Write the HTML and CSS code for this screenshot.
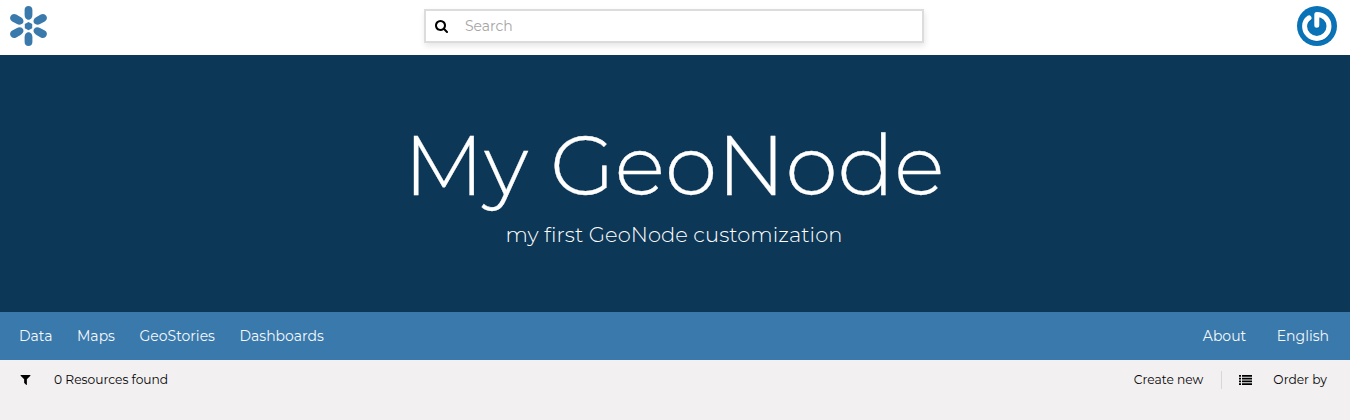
FILE: index.html
```html
<!DOCTYPE html>
<html lang="en">
<head>
<meta charset="utf-8">
<title>My GeoNode</title>
<link rel="stylesheet" href="styles.css">
</head>
<body>
<header class="topbar">
  <svg class="logo" viewBox="0 0 39 40" fill="#3a79ab">
    <path d="M19.500 15.900l3.700 2.100v4.200l-3.700 2.100-3.700-2.100V18z"/>
    <path id="petal" d="M19.500 0c2.300 0 3.900 1.600 3.900 4v4.800c0 2.600-1.100 4.400-3.100 5h-1.600c-2-.6-3.100-2.400-3.100-5V4c0-2.400 1.600-4 3.900-4z"/>
    <g transform="translate(19.500 20) scale(1.030 1) translate(-19.500 -20)">
      <use href="#petal" transform="rotate(60 19.500 20)"/>
      <use href="#petal" transform="rotate(120 19.500 20)"/>
      <use href="#petal" transform="rotate(240 19.500 20)"/>
      <use href="#petal" transform="rotate(300 19.500 20)"/>
    </g>
    <use href="#petal" transform="rotate(180 19.500 20)"/>
  </svg>
  <label class="search">
    <svg class="search-icon" viewBox="0 0 1664 1664"><path d="M1152 704q0-185-131.500-316.500T704 256 387.500 387.500 256 704t131.500 316.500T704 1152t316.500-131.500T1152 704zm512 832q0 52-38 90t-90 38q-54 0-90-38l-343-342q-179 124-399 124-143 0-273.500-55.500t-225-150-150-225T0 704t55.500-273.500 150-225 225-150T704 0t273.500 55.500 225 150 150 225T1408 704q0 220-124 399l343 343q37 37 37 90z"/></svg>
    <span class="placeholder">Search</span>
  </label>
  <svg class="avatar" viewBox="0 0 40 40">
    <circle cx="20" cy="20" r="20" fill="#0a72b7"/>
    <g fill="none" stroke-linecap="round" stroke-linejoin="round">
      <path d="M19.800 19.300V8.500c7 0 12.200 5 12.200 11.700a12.200 12.200 0 0 1-24.400 0c0-3.200 1.600-6.300 4.400-8.300" stroke="#075a96" stroke-width="5" opacity=".5" transform="translate(.6 1)"/>
      <path d="M19.800 19.300V8.500c7 0 12.200 5 12.200 11.700a12.200 12.200 0 0 1-24.400 0c0-3.200 1.600-6.300 4.400-8.300" stroke="#fff" stroke-width="5"/>
    </g>
  </svg>
</header>
<section class="hero">
  <h1 class="title">My GeoNode</h1>
  <p class="tagline">my first GeoNode customization</p>
</section>
<nav class="menu">
  <a class="data">Data</a><a class="maps">Maps</a><a class="stories">GeoStories</a><a class="boards">Dashboards</a>
  <a class="about">About</a><a class="lang">English</a>
</nav>
<div class="toolbar">
  <svg class="filter" viewBox="0 0 1410 1410"><path d="M1405 39q17 41-14 70L898 602v742q0 42-39 59-13 5-25 5-27 0-45-19l-256-256q-19-19-19-45V602L21 109Q-10 78 7 39 24 0 66 0h1280q42 0 59 39z"/></svg>
  <span class="count">0 Resources found</span>
  <span class="create">Create new</span>
  <i class="divider"></i>
  <svg class="list" viewBox="0 0 13 10"><path d="M0 0h2v1.700H0zM3 0h10v1.700H3zM0 2.800h2v1.700H0zM3 2.800h10v1.700H3zM0 5.500h2v1.700H0zM3 5.500h10v1.700H3zM0 8.300h2V10H0zM3 8.300h10V10H3z"/></svg>
  <span class="order">Order by</span>
</div>
</body>
</html>
```
FILE: styles.css
```css
* { box-sizing: border-box; }
body {
  margin: 0;
  height: 420px;
  overflow: hidden;
  background: #f2f0f1;
  color: #050505;
  font-family: Montserrat, Inter, "Open Sans", sans-serif;
}
.topbar {
  display: flex;
  align-items: flex-start;
  justify-content: space-between;
  height: 55px;
  padding: 6px 13px 0 9px;
  background: #fff;
}
.logo { width: 39px; height: 40px; }
.search {
  display: flex;
  align-items: center;
  width: 500px;
  height: 34px;
  margin: 3px 0 0 2px;
  padding-left: 9px;
  border: 2px solid #dcdcdc;
  background: #fff;
  box-shadow: 1px 3px 6px rgba(0, 0, 0, .1);
}
.search-icon { width: 13px; height: 13px; }
.placeholder {
  margin-left: 17.500px;
  color: #a5a5a5;
  font-size: 14px;
  line-height: 18px;
  padding-bottom: 1px;
}
.avatar { width: 40px; height: 40px; }
.hero {
  height: 257px;
  padding-top: 59px;
  background: #0d3757;
  color: #fff;
  text-align: center;
}
.title {
  margin: 0 2px 0 0;
  font-size: 84px;
  font-weight: 300;
  line-height: 102px;
  -webkit-text-stroke: .3px #fff;
}
.tagline {
  margin: 6px 2px 0 0;
  font-size: 21px;
  font-weight: 300;
  line-height: 26px;
  letter-spacing: .06px;
}
.menu {
  display: flex;
  align-items: center;
  height: 48px;
  padding: 0 21px 1px 19px;
  background: #3a79ab;
  color: #f4f8fb;
  font-size: 14px;
}
.menu a { white-space: nowrap; }
.data { width: 58px; }
.maps { width: 62.500px; }
.stories { width: 100px; }
.about { margin-left: auto; margin-right: 30.500px; }
.toolbar {
  display: flex;
  align-items: center;
  height: 39px;
  padding: 0 23px 0 20px;
  font-size: 12.250px;
}
.filter { width: 11px; height: 10px; }
.count { margin-left: 23px; }
.create { margin-left: auto; }
.divider { width: 1px; height: 18px; margin: 0 17px 0 18px; background: #d8d6d7; }
.list { width: 13px; height: 10px; }
.order { margin-left: 21px; }
```
